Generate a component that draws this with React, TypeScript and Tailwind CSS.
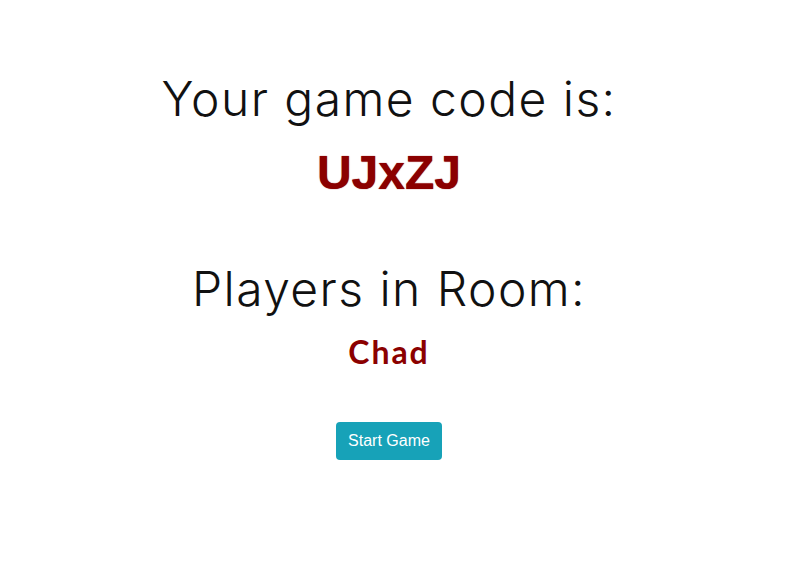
export default function App() {
  return (
    <div className="min-h-[570px] w-full bg-white pr-[22px] pt-[70px] flex flex-col items-center">
      <h1 className="text-[48px] leading-[58px] font-light text-[#111] font-['Inter','Lato',sans-serif] tracking-[0.03em]">
        Your game code is:
      </h1>
      <h2 className="mt-[16px] text-[48px] leading-[58px] font-bold text-[#8b0000] font-['Liberation_Sans',Arial,sans-serif] [text-shadow:0_0_1px_#8b0000]">
        UJxZJ
      </h2>
      <h1 className="mt-[58px] text-[48px] leading-[58px] font-light text-[#111] font-['Inter','Lato',sans-serif] tracking-[0.03em]">
        Players in Room:
      </h1>
      <p className="mt-[14px] text-[32px] leading-[40px] font-bold text-[#8b0000] font-['Lato','Noto_Sans',sans-serif] tracking-[0.06em]">
        Chad
      </p>
      <button className="mt-[50px] rounded-[4px] bg-[#17a2b8] px-[12px] py-[7px] text-[16px] leading-[24px] text-white font-['Liberation_Sans',Arial,sans-serif]">
        Start Game
      </button>
    </div>
  );
}
